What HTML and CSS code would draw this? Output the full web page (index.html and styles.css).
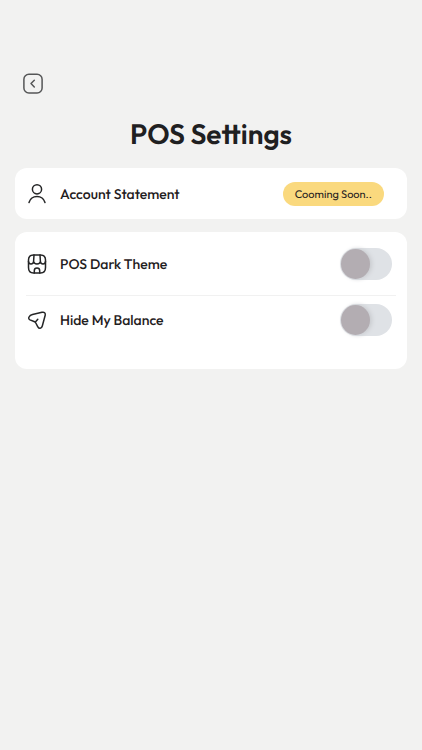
FILE: index.html
```html
<!DOCTYPE html>
<html lang="en">
<head>
<meta charset="utf-8">
<meta name="viewport" content="width=device-width, initial-scale=1">
<title>POS Settings</title>
<link rel="stylesheet" href="styles.css">
</head>
<body>
<main class="page">
  <button class="back" type="button" aria-label="Back">
    <svg viewBox="0 0 24 24" width="24" height="24">
      <rect x="2.900" y="2.300" width="18.200" height="18.600" rx="5"/>
      <path d="M13.300 8.200 10 11.500 13.300 15"/>
    </svg>
  </button>
  <h1 class="title">POS Settings</h1>

  <section class="card">
    <div class="row row-single">
      <svg class="icon" viewBox="0 0 24 24" width="24" height="24">
        <circle cx="12" cy="7.300" r="4.600"/>
        <path d="M4 20.600C5.200 16.800 8.200 14.600 12 14.600S18.800 16.800 20 20.600"/>
      </svg>
      <span class="label">Account Statement</span>
      <span class="badge">Cooming Soon..</span>
    </div>
  </section>

  <section class="card card-list">
    <div class="row">
      <svg class="icon" viewBox="0 0 24 24" width="24" height="24">
        <path d="M8.500 3h7C19 3 20.500 4.500 20.500 8v7.500C20.500 19.300 19 21 15.500 21h-7C5 21 3.500 19.300 3.500 15.500V8C3.500 4.500 5 3 8.500 3Z"/>
        <path d="M9 3 8.600 9.200M15 3l.4 6.200M3.500 9.500c.3 3.400 4.800 3.400 5.100-.3.300 3.700 6.500 3.700 6.800 0 .3 3.700 4.800 3.700 5.100.3M9.300 21v-2.300c0-3.600 5.400-3.600 5.400 0V21"/>
      </svg>
      <label class="label" for="dark-theme">POS Dark Theme</label>
      <input class="switch" id="dark-theme" type="checkbox" role="switch">
    </div>
    <div class="row">
      <svg class="icon" viewBox="0 0 24 24" width="24" height="24">
        <path d="M7.500 6.500 17 4.300c2.300-.5 3.700.7 3.200 3L17.300 18c-.8 3-3.300 3.100-4.600.6L10.800 15c-.3-.6-.6-.9-1.200-1.200L5 11.900C2.300 10.600 4.300 7.300 7.500 6.500ZM10.200 14.300l2.600-3"/>
      </svg>
      <label class="label" for="hide-balance">Hide My Balance</label>
      <input class="switch" id="hide-balance" type="checkbox" role="switch">
    </div>
  </section>
</main>
</body>
</html>
```
FILE: styles.css
```css
* {
  box-sizing: border-box;
}

body {
  margin: 0;
  min-height: 100vh;
  background: #f2f2f1;
  color: #1f2021;
  font-family: Outfit, Lato, sans-serif;
  text-rendering: geometricPrecision;
}

.page {
  padding: 72px 15px 24px;
}

.back {
  display: block;
  width: 24px;
  height: 24px;
  margin-left: 6px;
  padding: 0;
  border: 0;
  background: none;
  cursor: pointer;
}

svg {
  display: block;
  fill: none;
  stroke: #242526;
  stroke-width: 1.500;
  stroke-linecap: round;
  stroke-linejoin: round;
}

.back svg {
  stroke: #555657;
}

.title {
  margin: 21px 0 15px;
  font-size: 28px;
  line-height: 36px;
  font-weight: 600;
  text-align: center;
}

.card {
  padding: 0 11px;
  border-radius: 12px;
  background: #fff;
}

.card + .card {
  margin-top: 13px;
}

.card-list {
  padding-bottom: 25px;
}

.row {
  display: flex;
  align-items: center;
  min-height: 49px;
}

.row-single {
  min-height: 51px;
  padding-right: 12px;
}

.card-list .row:first-child {
  min-height: 63px;
}

.row + .row {
  border-top: 1px solid #f1f1f1;
}

.icon {
  flex: none;
  margin-left: -1px;
}

.label {
  flex: 1;
  margin-left: 11px;
  font-size: 14px;
  line-height: 20px;
  font-weight: 500;
}

.badge {
  padding: 0 12px;
  border-radius: 12px;
  background: #fad97e;
  font-size: 11px;
  line-height: 24px;
}

.switch {
  appearance: none;
  flex: none;
  width: 52px;
  height: 32px;
  margin: 0 4px 0 0;
  padding: 1px;
  border-radius: 16px;
  background: #dfe2e6;
  cursor: pointer;
}

.switch::before {
  content: "";
  display: block;
  width: 29px;
  height: 30px;
  border-radius: 50%;
  background: #b3adb2;
  box-shadow: 2px 0 4px #c8cace;
}

.switch:checked::before {
  margin-left: auto;
}
```
